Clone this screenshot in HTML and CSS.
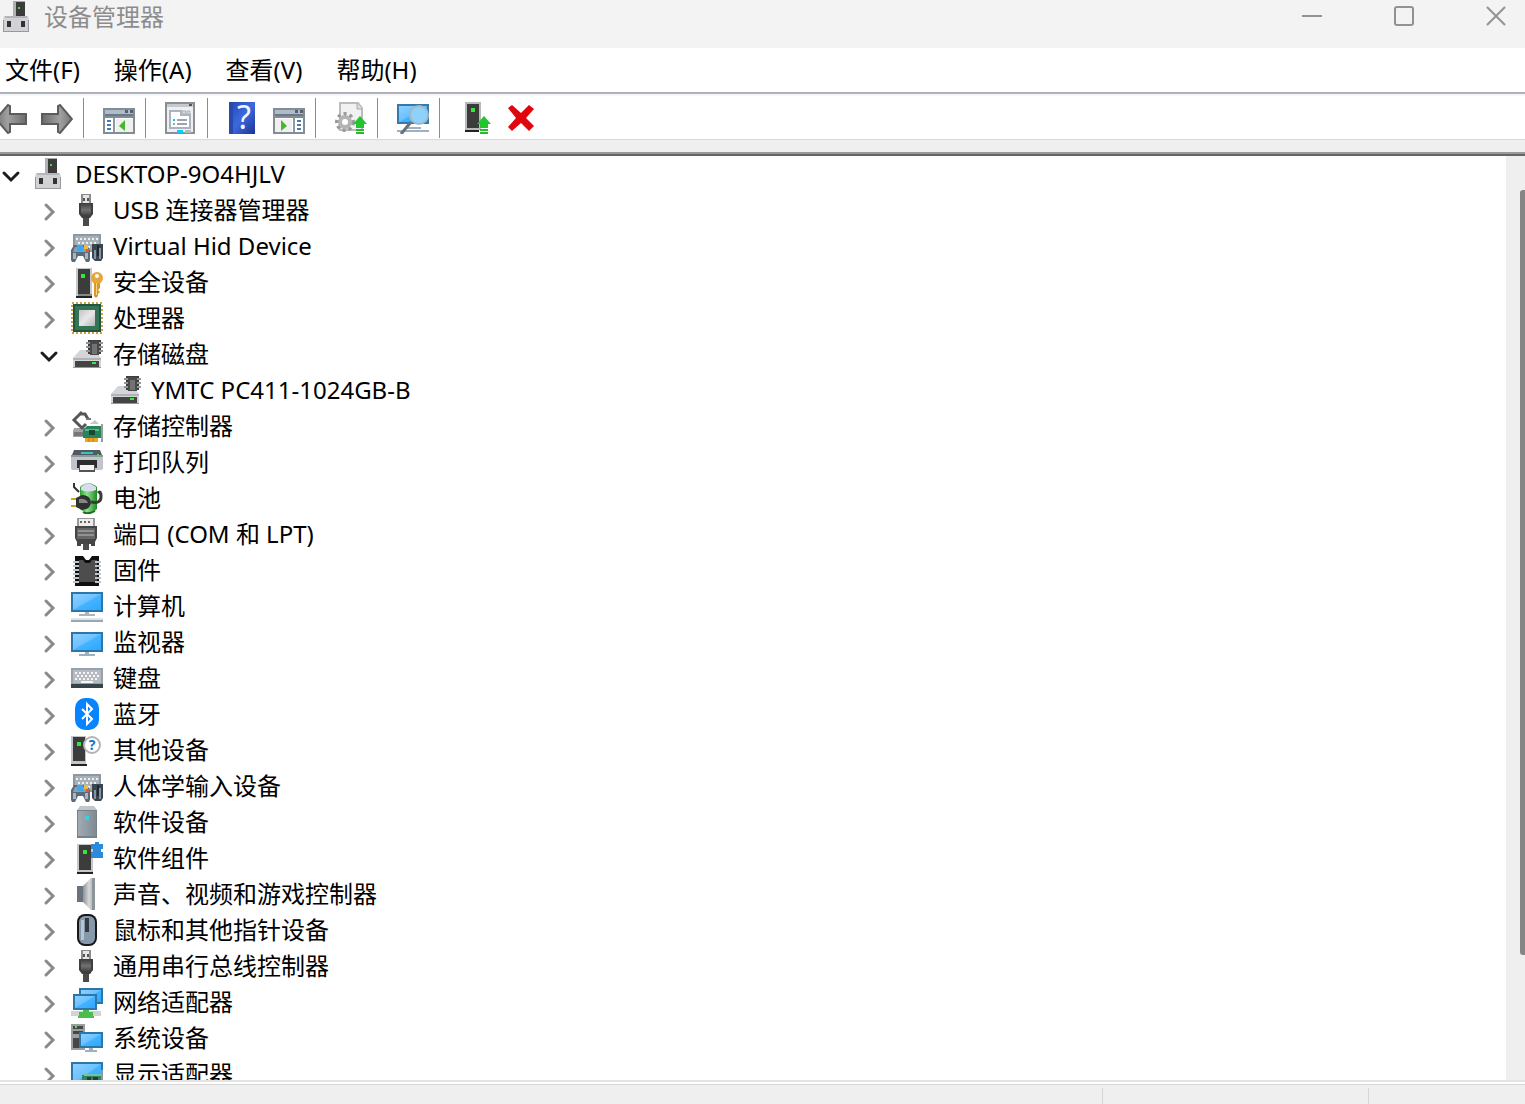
FILE: index.html
```html
<!DOCTYPE html>
<html lang="zh-CN">
<head>
    <meta charset="UTF-8">
    <meta name="viewport" content="width=device-width, initial-scale=1.0">
    <title>设备管理器</title>
    <link rel="stylesheet" href="styles.css">
</head>
<body>
    <!-- 图标库 -->
    <svg class="icon-library" aria-hidden="true">
        <defs>
            <linearGradient id="screen" x1="0" y1="0" x2="1" y2="1">
                <stop offset="0" stop-color="#8fd0ff"/><stop offset=".48" stop-color="#6bc2ff"/>
                <stop offset=".52" stop-color="#45b3ff"/><stop offset="1" stop-color="#2ca8ff"/>
            </linearGradient>
            <linearGradient id="metal" x1="0" y1="0" x2="1" y2="1">
                <stop offset="0" stop-color="#c4c4c4"/><stop offset=".5" stop-color="#e8e8e8"/><stop offset="1" stop-color="#b4b4b4"/>
            </linearGradient>
            <linearGradient id="dark" x1="0" y1="0" x2="0" y2="1">
                <stop offset="0" stop-color="#444"/><stop offset=".5" stop-color="#727272"/><stop offset="1" stop-color="#3c3c3c"/>
            </linearGradient>
            <linearGradient id="arrow" x1="0" y1="0" x2="1" y2="0">
                <stop offset="0" stop-color="#6c6c6c"/><stop offset=".6" stop-color="#a0a0a0"/><stop offset="1" stop-color="#777"/>
            </linearGradient>
            <linearGradient id="green" x1="0" y1="0" x2="1" y2="0">
                <stop offset="0" stop-color="#2f9c32"/><stop offset=".4" stop-color="#8fe38a"/><stop offset="1" stop-color="#1d8a25"/>
            </linearGradient>
            <linearGradient id="steel" x1="0" y1="0" x2="1" y2="0">
                <stop offset="0" stop-color="#a2abb3"/><stop offset="1" stop-color="#7f8a93"/>
            </linearGradient>
            <linearGradient id="cone" x1="0" y1="0" x2="1" y2="0">
                <stop offset="0" stop-color="#8d9297"/><stop offset=".5" stop-color="#d8d8d8"/><stop offset="1" stop-color="#98a0a8"/>
            </linearGradient>
            <linearGradient id="help" x1="0" y1="0" x2="1" y2="1">
                <stop offset="0" stop-color="#2546b8"/><stop offset=".5" stop-color="#3d69dc"/><stop offset="1" stop-color="#1b3494"/>
            </linearGradient>
        </defs>

        <symbol id="i-root" viewBox="0 0 32 32">
            <path d="M12 0h12v15H12z" fill="#3b3b3b"/><path d="M12 0h3v15h-3z" fill="#aeb1b5"/><path d="M12 0h12v1H12z" fill="#aaa"/>
            <path d="M17 6h2v2h-2z" fill="#3be03b"/>
            <path d="M3 15h24l1 4v12H2V19z" fill="#d2d2d6"/><path d="M2 30h26v1H2zM2 19h1v12H2zM27 19h1v12h-1z" fill="#9a9a9e"/>
            <path d="M4 15h22v2H4z" fill="#b5b5ba"/>
            <path d="M6 20h4v6H6zM20 20h4v6h-4z" fill="#333"/>
        </symbol>
        <symbol id="i-usb" viewBox="0 0 32 32">
            <path d="M10 0h10v10H10z" fill="#8b8b8b"/><path d="M12 1h6v9h-6z" fill="#e4e4e4"/><path d="M12 4h2v3h-2zM16 4h2v3h-2z" fill="#555"/>
            <path d="M8 9h14v11l-3 4h-8l-3-4z" fill="#3f3f3f"/><path d="M10 10h10v9l-2 3h-6l-2-3z" fill="url(#dark)"/>
            <path d="M12 24h6v8h-6z" fill="#4a4a4a"/>
        </symbol>
        <symbol id="i-hid" viewBox="0 0 32 32">
            <path d="M2 4h28v18H2z" fill="#8c98a3"/><path d="M4 6h24v14H4z" fill="#a8b0b8"/>
            <path d="M5 9h22M7 13h20M5 17h22" stroke="#f0f0f0" stroke-width="2" stroke-dasharray="2 2"/>
            <path d="M3 15h13l3 5v10l-1 2h-3l-3-6H7l-3 6H1l-1-2V20z" fill="#5c6b78"/><path d="M4 17h11l3 5H2z" fill="#8ea0b0"/>
            <path d="M6 15h6v6H6z" fill="#3aa7f4"/><path d="M13 15h4v4h-4z" fill="#f3bd3c"/><path d="M15 19h3v3h-3z" fill="#e45a3b"/>
            <path d="M2 23h3v6H2zM14 23h3v6h-3z" fill="#a9b5c0"/>
            <path d="M21 14h11v14l-2 3h-6l-3-3z" fill="#3a4550"/><path d="M23 20h2v9h-2zM28 18h2v11h-2z" fill="#8496a6"/><path d="M26 15h2v11h-2z" fill="#20282f"/>
        </symbol>
        <symbol id="i-tower" viewBox="0 0 32 32">
            <path d="M5 2h16v28H5z" fill="#c5c8cb"/><path d="M7 3h12v25H7z" fill="#3c3c3c"/><path d="M5 30h16v2H5z" fill="#222"/><path d="M7 28h14v2H7z" fill="#888"/>
            <path d="M10 8h4v4h-4z" fill="#33e638"/>
        </symbol>
        <symbol id="i-security" viewBox="0 0 32 32">
            <use href="#i-tower"/>
            <circle cx="26" cy="12" r="6" fill="#e5a63b"/><circle cx="26" cy="10" r="2" fill="#fff"/>
            <path d="M24 17h5v5l-2 2 2 2-2 2v2l-2 2-2-2V17z" fill="#dc972c"/><path d="M25 17h1v12h-1z" fill="#f8d48a"/>
        </symbol>
        <symbol id="i-cpu" viewBox="0 0 32 32">
            <path d="M1 1h30v30H1z" fill="none" stroke="#c9a24a" stroke-width="2" stroke-dasharray="2 2"/>
            <path d="M2 2h28v28H2z" fill="#22553d"/><path d="M4 4h24v24H4z" fill="#347355"/><path d="M8 8h16v16H8z" fill="url(#metal)"/>
        </symbol>
        <symbol id="i-disk" viewBox="0 0 32 32">
            <path d="M9 12h15l6 8v10H2V20z" fill="#d3d5d8"/><path d="M2 20h28v2H2z" fill="#b0b3b7"/><path d="M2 29h28v1H2z" fill="#94979b"/>
            <path d="M4 23h24v6H4z" fill="#444"/><path d="M21 24h4v2h-4z" fill="#35ea3c"/>
            <path d="M15 5h17M15 9h17M15 13h17" stroke="#8e969d" stroke-width="2"/><path d="M17 3h13M17 7h13M17 11h13M17 15h13" stroke="#3d3d3d" stroke-width="2"/>
            <path d="M19 3h9v14h-9z" fill="#4a4a4a"/><path d="M21 6h5v10h-5z" fill="#737373"/>
        </symbol>
        <symbol id="i-storage" viewBox="0 0 32 32">
            <path d="M3 18h11v9H2v-6z" fill="#a0a4a8"/><path d="M3 22h10v4H3z" fill="#777"/>
            <path d="M11 2l-8 8 8 8 4-4M8 4h6l3 5" fill="none" stroke="#565656" stroke-width="3"/><path d="M15 9h5" fill="none" stroke="#777" stroke-width="2"/>
            <path d="M20 13l4-3 4 4h-9z" fill="#c3c8c8"/>
            <path d="M12 20l4-4h14v12H12z" fill="#27835a"/><path d="M14 19h14v2H14z" fill="#5cb88b"/><path d="M18 20h6v5h-6z" fill="#174833"/>
            <path d="M14 28h13v4H14z" fill="#f0a41b"/><path d="M18 28v4M22 28v4" stroke="#c87810"/>
            <path d="M30 14h2v18h-2z" fill="#979da1"/>
        </symbol>
        <symbol id="i-printer" viewBox="0 0 32 32">
            <path d="M3 4h26l2 5H1z" fill="#525960"/><path d="M10 6h12v2H10z" fill="#38c5b4"/>
            <path d="M0 9h32v13q0 2-2 2H2q-2 0-2-2z" fill="#bfc5cb"/><path d="M0 9h32v2H0z" fill="#8f989f"/><path d="M26 8h2v2h-2z" fill="#31ed3f"/>
            <path d="M6 14h20v8H6z" fill="#2d2d2d"/><path d="M8 19h16v7H8z" fill="#555"/><path d="M9 19h14v5H9z" fill="#f3f3f3"/>
        </symbol>
        <symbol id="i-battery" viewBox="0 0 32 32">
            <path d="M9 5q8-8 17 0v22q-8 8-17 0z" fill="url(#green)"/><path d="M10 5q7-7 15 0v3q-8 3-15 0z" fill="#d9dcee"/><path d="M12 30q5 3 12-1" stroke="#1c6d22" stroke-width="2" fill="none"/>
            <path d="M3 1v4l5 5" fill="none" stroke="#333" stroke-width="2"/>
            <path d="M20 20q10 2 10-5t-3-4" fill="none" stroke="#3a3a3a" stroke-width="3"/>
            <path d="M0 17h6M0 24h6" stroke="#d6a41c" stroke-width="2"/>
            <path d="M5 16l6-3q8 0 9 7 0 7-9 8l-6-3z" fill="#303030"/><path d="M8 17q7-1 9 4H8z" fill="#858585"/>
        </symbol>
        <symbol id="i-port" viewBox="0 0 32 32">
            <path d="M6 0h18v9H6z" fill="#9b9b9b"/><path d="M8 1h14v8H8z" fill="#ececec"/><path d="M9 4h12" stroke="#666" stroke-width="2" stroke-dasharray="2 2"/>
            <path d="M4 8h22v12l-2 4v4h-4v-2H10v2H6v-4l-2-4z" fill="#454545"/><path d="M6 10h18v11H6z" fill="#666"/><path d="M7 12h16v2H7zM7 16h16v2H7z" fill="#929292"/>
            <path d="M12 26h6v6h-6z" fill="#4c4c4c"/>
        </symbol>
        <symbol id="i-firmware" viewBox="0 0 32 32">
            <path d="M4 2h8l3 4h3l3-4h7v30H4z" fill="#0f0f0f"/><path d="M8 6h4l2 3h5l2-3h5v22H8z" fill="#4d4d4d"/>
            <path d="M5 7v22M27 7v22" stroke="#bcc4cc" stroke-width="6" stroke-dasharray="2 2"/><path d="M8 6h4l2 3h5l2-3h3v22H8z" fill="#4d4d4d"/>
        </symbol>
        <symbol id="i-computer" viewBox="0 0 32 32">
            <path d="M0 2h32v20H0z" fill="#2d76a8"/><path d="M2 4h28v16H2z" fill="url(#screen)"/>
            <path d="M14 22h4v2h6v2H8v-2h6z" fill="#a7b6c4"/><path d="M0 28h32v2H0z" fill="#dde4ea"/><path d="M0 30h32v2H0z" fill="#98a6b4"/>
        </symbol>
        <symbol id="i-monitor" viewBox="0 0 32 32">
            <path d="M0 6h32v20H0z" fill="#2d76a8"/><path d="M2 8h28v16H2z" fill="url(#screen)"/>
            <path d="M14 26h4v2h6v2H8v-2h6z" fill="#9fb0c0"/>
        </symbol>
        <symbol id="i-keyboard" viewBox="0 0 32 32">
            <path d="M0 6h32v18H0z" fill="#97a1aa"/><path d="M2 8h28v13H2z" fill="#b5bbc1"/>
            <path d="M4 11h24M6 14h22M4 17h24" stroke="#f6f6f6" stroke-width="2" stroke-dasharray="2 2"/><path d="M10 19h12v2H10z" fill="#f6f6f6"/>
            <path d="M0 22h32v4H0z" fill="#36434a"/>
        </symbol>
        <symbol id="i-bluetooth" viewBox="0 0 32 32">
            <rect x="4" width="24" height="32" rx="10" fill="#0783ff"/>
            <path d="M11 11l10 10-5 5V6l5 5-10 10" fill="none" stroke="#fff" stroke-width="2"/>
        </symbol>
        <symbol id="i-soft" viewBox="0 0 32 32">
            <path d="M9 0h14l3 4v28H6V4z" fill="#c1c6ca"/><path d="M6 4h20v28H6z" fill="#77818a"/><path d="M7 5h18v25H7z" fill="url(#steel)"/>
            <path d="M14 10h4v4h-4z" fill="#30d2e5"/>
        </symbol>
        <symbol id="i-component" viewBox="0 0 32 32">
            <path d="M6 2h16v28H6z" fill="#c5c8cb"/><path d="M8 3h12v25H8z" fill="#3c3c3c"/><path d="M6 30h16v2H6z" fill="#222"/><path d="M12 8h4v4h-4z" fill="#33e638"/>
            <path d="M20 2h4V0h4v2h4v5h-2v3h2v6h-12v-6h2V7h-2z" fill="#2b8bda"/>
        </symbol>
        <symbol id="i-sound" viewBox="0 0 32 32">
            <path d="M6 8h6v16H6z" fill="#68737f"/><path d="M12 8l8-8h4v32h-4l-8-8z" fill="url(#cone)"/><path d="M21 0h3v32h-3z" fill="#8c949c"/>
        </symbol>
        <symbol id="i-mouse" viewBox="0 0 32 32">
            <rect x="6" width="20" height="32" rx="8" fill="#15191d"/><rect x="8" y="2" width="16" height="28" rx="6" fill="#8699ab"/>
            <path d="M10 6h3v20h-3z" fill="#b8c5d1"/><path d="M14 4h4v14h-4z" fill="#343b42"/>
        </symbol>
        <symbol id="i-network" viewBox="0 0 32 32">
            <path d="M8 2h24v16H8z" fill="#2d76a8"/><path d="M10 4h20v12H10z" fill="url(#screen)"/>
            <path d="M2 8h24v16H2z" fill="#2d76a8"/><path d="M4 10h20v12H4z" fill="url(#screen)"/>
            <path d="M0 25h30v5H0z" fill="#d3d3d3"/><path d="M12 24h6v2h4v4h1v2H7v-2h1v-4h4z" fill="#4cbb50"/>
        </symbol>
        <symbol id="i-system" viewBox="0 0 32 32">
            <path d="M0 2h14v26H0z" fill="#9b9fa2"/><path d="M2 4h10v3H2zM2 9h10v3H2zM2 16h7v10H2z" fill="#464646"/><path d="M4 4h2v2H4z" fill="#3bed40"/>
            <path d="M8 10h24v16H8z" fill="#2d76a8"/><path d="M10 12h20v12H10z" fill="url(#screen)"/><path d="M18 26h4v2h4v2H14v-2h4z" fill="#9fb0c0"/>
        </symbol>
        <symbol id="i-display" viewBox="0 0 32 32">
            <path d="M0 4h32v24H0z" fill="#2d76a8"/><path d="M2 6h28v20H2z" fill="url(#screen)"/>
            <path d="M11 17h19v11H11z" fill="#2f8562"/><path d="M13 16h17v2H13z" fill="#74c29d"/><path d="M16 19h4v4h-4zM22 19h5v4h-5z" fill="#2c3935"/><path d="M30 12h2v20h-2z" fill="#8e9aa3"/>
        </symbol>

        <symbol id="t-arrow" viewBox="0 0 32 32">
            <path d="M1 12h16V4l2-1 12 14-12 14-2-1v-8H1z" fill="url(#arrow)" stroke="#5c5c5c" stroke-width="2"/>
        </symbol>
        <symbol id="t-tree" viewBox="0 0 32 32">
            <path d="M0 6h32v26H0z" fill="#858d94"/><path d="M2 8h28v4H2z" fill="#aebccb"/><path d="M2 12h28v2H2z" fill="#6c7a88"/><path d="M22 8h3v3h-3zM27 8h3v3h-3z" fill="#53616e"/>
            <path d="M2 16h28v14H2z" fill="#fff"/><path d="M10 16h2v14h-2z" fill="#8b98a5"/><path d="M13 17h17v13H13z" fill="#f0f0f0"/>
            <path d="M4 19h4M4 23h4M4 27h4" stroke="#427cb9" stroke-width="2"/><path d="M22 18v11l-6-5z" fill="#46b82e"/>
        </symbol>
        <symbol id="t-action" viewBox="0 0 32 32">
            <path d="M0 6h32v26H0z" fill="#858d94"/><path d="M2 8h28v4H2z" fill="#aebccb"/><path d="M2 12h28v2H2z" fill="#6c7a88"/><path d="M22 8h3v3h-3zM27 8h3v3h-3z" fill="#53616e"/>
            <path d="M2 16h28v14H2z" fill="#fff"/><path d="M2 17h17v13H2z" fill="#f0f0f0"/><path d="M20 16h2v14h-2z" fill="#8b98a5"/>
            <path d="M24 19h4M24 23h4M24 27h4" stroke="#427cb9" stroke-width="2"/><path d="M8 18v11l6-5z" fill="#46b82e"/>
        </symbol>
        <symbol id="t-props" viewBox="0 0 32 32">
            <path d="M1 1h28v30H1z" fill="#eef0f1" stroke="#8b8f93" stroke-width="2"/><path d="M2 2h26v3H2z" fill="#c5c9ce"/><path d="M24 2h3v2h-3z" fill="#555"/>
            <path d="M5 26V9h11v4h9v13z" fill="#fff" stroke="#aab3bf" stroke-width="2"/><path d="M17 9h4v3h-4zM22 9h3v3h-3z" fill="#d5dae0" stroke="#aab3bf"/>
            <path d="M8 17h2v2H8z" fill="#0fc5ef"/><path d="M12 17h10v2H12zM8 21h2v2H8zM12 21h10v2H12z" fill="#9aa4ae"/>
            <path d="M12 28h6v3h-6z" fill="#11cdf5"/><path d="M20 28h6v3h-6z" fill="#b5b8bb"/>
        </symbol>
        <symbol id="t-update" viewBox="0 0 32 32">
            <path d="M5 1h18l4 5v22H5z" fill="#f1f1f1" stroke="#bcbcbc" stroke-width="2"/><path d="M22 1v6h5" fill="#ddd" stroke="#aaa"/>
            <circle cx="10" cy="20" r="8" fill="none" stroke="#999" stroke-width="4" stroke-dasharray="3 3"/><circle cx="10" cy="20" r="5" fill="#fff" stroke="#b4b4b4" stroke-width="4"/>
            <use href="#t-up"/>
        </symbol>
        <symbol id="t-up" viewBox="0 0 32 32">
            <path d="M25 14l7 8h-3v4h-8v-4h-3z" fill="#24c42f"/><path d="M21 27h8v2h-8zM21 30h8v2h-8z" fill="#23bc2d"/>
        </symbol>
        <symbol id="t-scan" viewBox="0 0 32 32">
            <path d="M0 2h32v20H0z" fill="#347aa9"/><path d="M2 4h28v16H2z" fill="url(#screen)"/><path d="M0 28h32v2H0zM10 25h14v2H10z" fill="#a1b0c1"/>
            <path d="M14 20L4 32" stroke="#65717c" stroke-width="3"/><circle cx="22" cy="13" r="9" fill="#8ed2fb" stroke="#a6b7c4" stroke-width="2"/>
        </symbol>
        <symbol id="t-driver" viewBox="0 0 32 32">
            <path d="M6 0h16v28H6z" fill="#b8bbbd"/><path d="M8 2h12v24H8z" fill="#3c3c3c"/><path d="M6 28h14v2H6z" fill="#222"/><path d="M12 6h4v4h-4z" fill="#33e638"/>
            <use href="#t-up"/>
        </symbol>
        <symbol id="t-remove" viewBox="0 0 32 32">
            <path d="M3 6l4-3 9 8 8-8 5 4-8 9 8 8-5 5-8-8-9 8-4-4 8-9z" fill="#e0060e"/>
        </symbol>

        <symbol id="c-closed" viewBox="0 0 22 36">
            <path d="M8 13l7 7-7 7" fill="none" stroke="#8a8a8a" stroke-width="3" stroke-linecap="round"/>
        </symbol>
        <symbol id="c-open" viewBox="0 0 22 36">
            <path d="M4 17l7 7 7-7" fill="none" stroke="#1c1c1c" stroke-width="3" stroke-linecap="round"/>
        </symbol>
    </svg>

    <header class="titlebar">
        <svg class="icon"><use href="#i-root"/></svg>
        <h1>设备管理器</h1>
        <div class="window-controls">
            <button aria-label="最小化"><svg viewBox="0 0 20 20"><path d="M0 10h20"/></svg></button>
            <button aria-label="最大化"><svg viewBox="0 0 20 20"><rect x="1" y="1" width="18" height="18" rx="2"/></svg></button>
            <button aria-label="关闭"><svg viewBox="0 0 20 20"><path d="M1 1l18 18M19 1L1 19"/></svg></button>
        </div>
    </header>

    <nav class="menubar">
        <button>文件(F)</button>
        <button>操作(A)</button>
        <button>查看(V)</button>
        <button>帮助(H)</button>
    </nav>

    <div class="toolbar">
        <button aria-label="后退"><svg class="icon icon-back"><use href="#t-arrow"/></svg></button>
        <button aria-label="前进"><svg class="icon"><use href="#t-arrow"/></svg></button>
        <span class="separator"></span>
        <button aria-label="显示/隐藏控制台树"><svg class="icon"><use href="#t-tree"/></svg></button>
        <span class="separator"></span>
        <button aria-label="属性"><svg class="icon"><use href="#t-props"/></svg></button>
        <span class="separator"></span>
        <button aria-label="帮助">
            <svg class="icon" viewBox="0 0 32 32">
                <path d="M2 0h26v32H2z" fill="url(#help)"/><path d="M2 0h4v32H2z" fill="#2849ae"/>
                <text x="17" y="27" class="icon-mark icon-mark-help">?</text>
            </svg>
        </button>
        <button aria-label="显示/隐藏操作窗格"><svg class="icon"><use href="#t-action"/></svg></button>
        <span class="separator"></span>
        <button aria-label="更新驱动程序"><svg class="icon"><use href="#t-update"/></svg></button>
        <span class="separator"></span>
        <button aria-label="扫描检测硬件改动"><svg class="icon"><use href="#t-scan"/></svg></button>
        <span class="separator"></span>
        <button aria-label="添加驱动程序"><svg class="icon"><use href="#t-driver"/></svg></button>
        <button aria-label="卸载设备"><svg class="icon"><use href="#t-remove"/></svg></button>
    </div>
    <div class="divider"></div>

    <main class="content">
        <ul class="tree">
            <li>
                <div class="row"><button aria-label="折叠"><svg class="chevron"><use href="#c-open"/></svg></button><svg class="icon"><use href="#i-root"/></svg><span>DESKTOP-9O4HJLV</span></div>
                <ul>
                    <li class="row"><button aria-label="展开"><svg class="chevron"><use href="#c-closed"/></svg></button><svg class="icon"><use href="#i-usb"/></svg><span>USB 连接器管理器</span></li>
                    <li class="row"><button aria-label="展开"><svg class="chevron"><use href="#c-closed"/></svg></button><svg class="icon"><use href="#i-hid"/></svg><span>Virtual Hid Device</span></li>
                    <li class="row"><button aria-label="展开"><svg class="chevron"><use href="#c-closed"/></svg></button><svg class="icon"><use href="#i-security"/></svg><span>安全设备</span></li>
                    <li class="row"><button aria-label="展开"><svg class="chevron"><use href="#c-closed"/></svg></button><svg class="icon"><use href="#i-cpu"/></svg><span>处理器</span></li>
                    <li>
                        <div class="row"><button aria-label="折叠"><svg class="chevron"><use href="#c-open"/></svg></button><svg class="icon"><use href="#i-disk"/></svg><span>存储磁盘</span></div>
                        <ul>
                            <li class="row leaf"><svg class="icon"><use href="#i-disk"/></svg><span>YMTC PC411-1024GB-B</span></li>
                        </ul>
                    </li>
                    <li class="row"><button aria-label="展开"><svg class="chevron"><use href="#c-closed"/></svg></button><svg class="icon"><use href="#i-storage"/></svg><span>存储控制器</span></li>
                    <li class="row"><button aria-label="展开"><svg class="chevron"><use href="#c-closed"/></svg></button><svg class="icon"><use href="#i-printer"/></svg><span>打印队列</span></li>
                    <li class="row"><button aria-label="展开"><svg class="chevron"><use href="#c-closed"/></svg></button><svg class="icon"><use href="#i-battery"/></svg><span>电池</span></li>
                    <li class="row"><button aria-label="展开"><svg class="chevron"><use href="#c-closed"/></svg></button><svg class="icon"><use href="#i-port"/></svg><span>端口 (COM 和 LPT)</span></li>
                    <li class="row"><button aria-label="展开"><svg class="chevron"><use href="#c-closed"/></svg></button><svg class="icon"><use href="#i-firmware"/></svg><span>固件</span></li>
                    <li class="row"><button aria-label="展开"><svg class="chevron"><use href="#c-closed"/></svg></button><svg class="icon"><use href="#i-computer"/></svg><span>计算机</span></li>
                    <li class="row"><button aria-label="展开"><svg class="chevron"><use href="#c-closed"/></svg></button><svg class="icon"><use href="#i-monitor"/></svg><span>监视器</span></li>
                    <li class="row"><button aria-label="展开"><svg class="chevron"><use href="#c-closed"/></svg></button><svg class="icon"><use href="#i-keyboard"/></svg><span>键盘</span></li>
                    <li class="row"><button aria-label="展开"><svg class="chevron"><use href="#c-closed"/></svg></button><svg class="icon"><use href="#i-bluetooth"/></svg><span>蓝牙</span></li>
                    <li class="row">
                        <button aria-label="展开"><svg class="chevron"><use href="#c-closed"/></svg></button>
                        <svg class="icon" viewBox="0 0 32 32">
                            <path d="M0 2h15v28H0z" fill="#c3c6c8"/><path d="M2 3h12v24H2z" fill="#3c3c3c"/><path d="M0 30h16v2H0z" fill="#222"/><path d="M6 8h4v4H6z" fill="#33e638"/>
                            <circle cx="21" cy="11" r="8" fill="#fff" stroke="#b4b4b4" stroke-width="2"/>
                            <text x="21" y="16" class="icon-mark icon-mark-blue">?</text>
                        </svg>
                        <span>其他设备</span>
                    </li>
                    <li class="row"><button aria-label="展开"><svg class="chevron"><use href="#c-closed"/></svg></button><svg class="icon"><use href="#i-hid"/></svg><span>人体学输入设备</span></li>
                    <li class="row"><button aria-label="展开"><svg class="chevron"><use href="#c-closed"/></svg></button><svg class="icon"><use href="#i-soft"/></svg><span>软件设备</span></li>
                    <li class="row"><button aria-label="展开"><svg class="chevron"><use href="#c-closed"/></svg></button><svg class="icon"><use href="#i-component"/></svg><span>软件组件</span></li>
                    <li class="row"><button aria-label="展开"><svg class="chevron"><use href="#c-closed"/></svg></button><svg class="icon"><use href="#i-sound"/></svg><span>声音、视频和游戏控制器</span></li>
                    <li class="row"><button aria-label="展开"><svg class="chevron"><use href="#c-closed"/></svg></button><svg class="icon"><use href="#i-mouse"/></svg><span>鼠标和其他指针设备</span></li>
                    <li class="row"><button aria-label="展开"><svg class="chevron"><use href="#c-closed"/></svg></button><svg class="icon"><use href="#i-usb"/></svg><span>通用串行总线控制器</span></li>
                    <li class="row"><button aria-label="展开"><svg class="chevron"><use href="#c-closed"/></svg></button><svg class="icon"><use href="#i-network"/></svg><span>网络适配器</span></li>
                    <li class="row"><button aria-label="展开"><svg class="chevron"><use href="#c-closed"/></svg></button><svg class="icon"><use href="#i-system"/></svg><span>系统设备</span></li>
                    <li class="row"><button aria-label="展开"><svg class="chevron"><use href="#c-closed"/></svg></button><svg class="icon"><use href="#i-display"/></svg><span>显示适配器</span></li>
                </ul>
            </li>
        </ul>
        <div class="scrollbar"><div class="thumb"></div></div>
    </main>

    <footer class="statusbar">
        <span class="status-main"></span>
        <span class="status-mid"></span>
        <span class="status-end"></span>
    </footer>
</body>
</html>
```
FILE: styles.css
```css
* {
    box-sizing: border-box;
}
body {
    margin: 0;
    height: 100vh;
    display: flex;
    flex-direction: column;
    overflow: hidden;
    background-color: #fff;
    color: #000;
    font-family: "Noto Sans", "Noto Sans CJK SC", sans-serif;
    font-size: 24px;
    line-height: 36px;
}
button {
    padding: 0;
    border: none;
    background: none;
    color: inherit;
    font: inherit;
}
svg {
    display: block;
}
ul {
    margin: 0;
    padding: 0;
    list-style: none;
}
.icon-library {
    position: absolute;
    width: 0;
    height: 0;
}
.icon {
    flex: none;
    width: 32px;
    height: 32px;
}
.icon-back {
    transform: scaleX(-1);
}
.icon-mark {
    font-family: "Noto Sans", sans-serif;
    text-anchor: middle;
}
.icon-mark-blue {
    font-size: 14px;
    font-weight: bold;
    fill: #1673c5;
}
.icon-mark-help {
    font-size: 32px;
    fill: #f4f6ff;
}

/* 标题栏 */
.titlebar {
    flex: none;
    display: flex;
    align-items: center;
    height: 48px;
    padding: 0 19px 14px 1px;
    background-color: #f3f3f3;
}
.titlebar h1 {
    flex: 1;
    margin: 0 0 0 11px;
    font-size: 24px;
    font-weight: normal;
    color: #8c8c8c;
}
.window-controls {
    display: flex;
    gap: 72px;
    padding-bottom: 2px;
}
.window-controls svg {
    width: 20px;
    height: 20px;
    fill: none;
    stroke: #929292;
    stroke-width: 2;
}

/* 菜单 */
.menubar {
    flex: none;
    display: flex;
    gap: 34px;
    height: 46px;
    padding: 4px 5px;
    border-bottom: 2px solid #b2b2b6;
}

/* 工具栏 */
.toolbar {
    flex: none;
    display: flex;
    align-items: center;
    height: 46px;
    margin-left: -12px;
    border-top: 2px solid #f3f7fb;
    border-bottom: 1px solid #d9d9d9;
}
.toolbar button {
    flex: none;
    width: 46px;
    padding: 0 7px;
}
.separator {
    flex: none;
    width: 1px;
    height: 40px;
    margin: 0 12px 0 3px;
    background-color: #8c8c8c;
}
.divider {
    flex: none;
    height: 14px;
    background-color: #efefef;
    border-bottom: 2px solid #999;
}

/* 设备树 */
.content {
    flex: 1;
    min-height: 0;
    display: flex;
    border-top: 2px solid #666;
    border-bottom: 2px solid #e4e4e4;
}
.tree {
    flex: 1;
    overflow: hidden;
}
.tree ul {
    padding-left: 38px;
}
.row {
    display: flex;
    align-items: center;
    height: 36px;
    white-space: nowrap;
}
.row .icon {
    margin: 0 10px 0 11px;
}
.chevron {
    width: 22px;
    height: 36px;
}
.leaf {
    padding-left: 22px;
}
.scrollbar {
    flex: none;
    width: 19px;
    padding: 34px 0 0 14px;
    background-color: #efefef;
}
.thumb {
    height: 86%;
    border-radius: 3px 0 0 3px;
    background-color: #858585;
}

/* 状态栏 */
.statusbar {
    flex: none;
    display: flex;
    height: 20px;
    margin-top: 2px;
    padding-top: 3px;
    border-top: 1px solid #d5d5d5;
    background-color: #efefef;
}
.status-main {
    flex: 1;
}
.status-mid {
    width: 266px;
    border-left: 1px solid #d5d5d5;
}
.status-end {
    width: 157px;
    border-left: 1px solid #d5d5d5;
}
```
